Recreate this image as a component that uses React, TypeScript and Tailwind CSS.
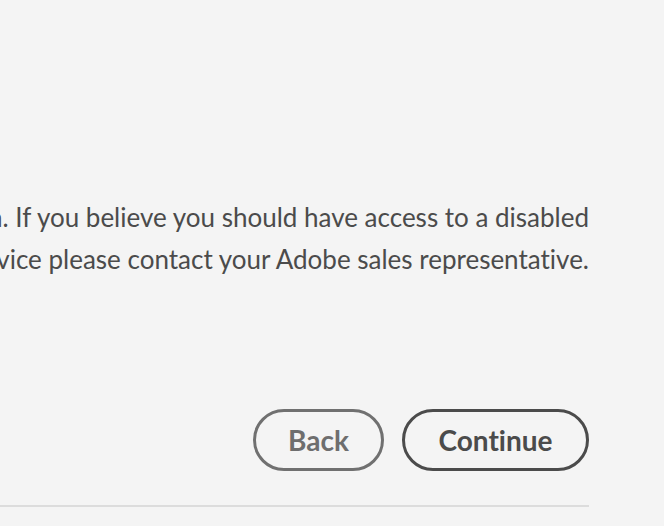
const App = () => {
  return (
    <div
      className="h-[526px] w-full overflow-hidden bg-[#f4f4f4] text-[#4b4b4b] [font-variant-ligatures:none]"
      style={{ fontFamily: 'Lato, "Open Sans", sans-serif' }}
    >
      <div className="flex flex-col pr-[75px] pt-[196px]">
        <div className="flex flex-col text-[26px] leading-[42px]">
          <div className="flex justify-end">
            <p className="shrink-0 whitespace-nowrap">
              the following list has been restricted by your organization. If you believe you should have access to a disabled
            </p>
          </div>
          <div className="flex justify-end">
            <p className="shrink-0 whitespace-nowrap">
              application or service please contact your Adobe sales representative.
            </p>
          </div>
        </div>
        <div className="mt-[129px] flex justify-end gap-[18px]">
          <button className="h-[62px] w-[131px] rounded-full border-[3px] border-[#707070] text-[28px] font-bold text-[#6e6e6e]">
            Back
          </button>
          <button className="h-[62px] w-[187px] rounded-full border-[3px] border-[#4b4b4b] text-[28px] font-bold text-[#4b4b4b]">
            Continue
          </button>
        </div>
        <div className="mt-[34px] h-[2px] bg-[#dcdcdc]" />
      </div>
    </div>
  )
}

export default App
